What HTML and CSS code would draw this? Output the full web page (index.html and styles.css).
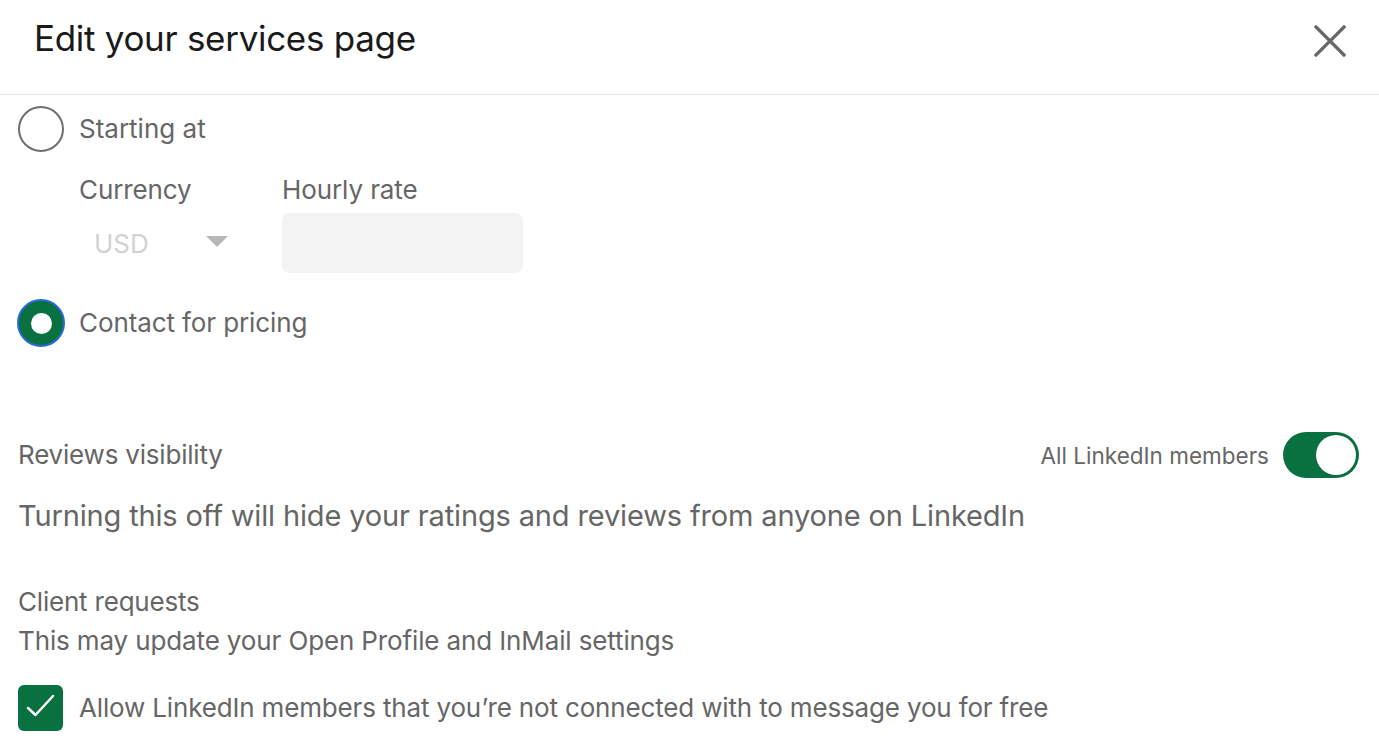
FILE: index.html
```html
<!DOCTYPE html>
<html lang="en">
<head>
<meta charset="utf-8">
<title>Edit your services page</title>
<link rel="stylesheet" href="styles.css">
</head>
<body>
<div class="modal">
  <header class="modal-header">
    <h1 class="modal-title">Edit your services page</h1>
    <button class="close-btn" aria-label="Close">
      <svg width="32" height="32" viewBox="0 0 32 32"><path d="M2 2 L30 30 M30 2 L2 30" stroke="#666" stroke-width="3.2" stroke-linecap="square" fill="none"/></svg>
    </button>
  </header>
  <main class="modal-body">
    <label class="radio-row first">
      <span class="radio"></span>
      <span class="radio-label">Starting at</span>
    </label>
    <div class="price-fields">
      <div class="field currency">
        <span class="field-label">Currency</span>
        <div class="select">
          <span class="select-value">USD</span>
          <span class="select-caret"></span>
        </div>
      </div>
      <div class="field rate">
        <span class="field-label">Hourly rate</span>
        <div class="input"></div>
      </div>
    </div>
    <label class="radio-row second">
      <span class="radio checked"></span>
      <span class="radio-label">Contact for pricing</span>
    </label>

    <section class="reviews">
      <div class="reviews-head">
        <span class="section-label">Reviews visibility</span>
        <div class="toggle-wrap">
          <span class="toggle-label">All LinkedIn members</span>
          <span class="toggle"><span class="knob"></span></span>
        </div>
      </div>
      <p class="reviews-desc">Turning this off will hide your ratings and reviews from anyone on LinkedIn</p>
    </section>

    <section class="clients">
      <div class="section-label">Client requests</div>
      <div class="clients-desc">This may update your Open Profile and InMail settings</div>
      <label class="check-row">
        <span class="checkbox">
          <svg width="45" height="46" viewBox="0 0 45 46"><path d="M10 23 L17.5 30 L35 11" stroke="#fff" stroke-width="2.5" fill="none" stroke-linecap="round" stroke-linejoin="round"/></svg>
        </span>
        <span class="check-label">Allow LinkedIn members that you’re not connected with to message you for free</span>
      </label>
    </section>
  </main>
</div>
</body>
</html>
```

FILE: styles.css
```css
* { box-sizing: border-box; }
html, body { margin: 0; padding: 0; background: #fff; }
body {
  font-family: Inter, "Noto Sans", "Liberation Sans", sans-serif;
  color: #666;
  width: 1379px;
  height: 750px;
  overflow: hidden;
}
.modal { width: 100%; }
.modal-header {
  height: 95px;
  border-bottom: 1px solid #e6e6e6;
  display: flex;
  align-items: center;
  justify-content: space-between;
  padding: 0 33px 0 34px;
}
.modal-title {
  margin: 0 0 18px 0;
  font-size: 35px;
  font-weight: 400;
  color: #1a1a1a;
  letter-spacing: -0.3px;
}
.close-btn {
  border: 0;
  background: none;
  padding: 0;
  width: 32px;
  height: 32px;
  margin-bottom: 12px;
  display: flex;
}
.modal-body { padding: 0 20px 0 18px; }

.radio-row {
  display: flex;
  align-items: center;
  gap: 15px;
  height: 46px;
}
.radio-row.first { margin-top: 11px; }
.radio-row.second { margin-top: 27px; }
.radio {
  width: 46px;
  height: 46px;
  border-radius: 50%;
  border: 2px solid #6f6f6f;
  flex: none;
  position: relative;
}
.radio.checked {
  width: 48px;
  height: 48px;
  margin-left: -1px;
  border: 2px solid #2a6ad8;
  background: #09713f;
  box-shadow: inset 0 0 0 1px #09713f;
}
.radio.checked::after {
  content: "";
  position: absolute;
  left: 50%; top: 50%;
  width: 21px; height: 21px;
  margin: -10.5px 0 0 -10.5px;
  border-radius: 50%;
  background: #fff;
}
.radio-row.second { gap: 14px; }
.radio-label { font-size: 26px; line-height: 32px; color: #666; }
.radio-row.second .radio-label { letter-spacing: -0.1px; }

.price-fields {
  display: flex;
  gap: 22px;
  margin-left: 61px;
  margin-top: 23px;
}
.field { display: flex; flex-direction: column; }
.field-label { font-size: 26px; line-height: 30px; color: #666; letter-spacing: -0.1px; }
.currency { width: 181px; }
.select {
  height: 60px;
  margin-top: 8px;
  display: flex;
  align-items: center;
  padding-left: 15px;
}
.select-value { font-size: 26px; color: #d2d2d2; width: 112px; }
.select-caret {
  width: 0; height: 0;
  border-left: 11px solid transparent;
  border-right: 11px solid transparent;
  border-top: 11px solid #b8b8b8;
  margin-top: -4px;
}
.input {
  width: 241px;
  height: 60px;
  margin-top: 8px;
  border-radius: 8px;
  background: #f3f3f3;
}

.reviews { margin-top: 86px; }
.reviews-head {
  display: flex;
  align-items: center;
  justify-content: space-between;
  height: 46px;
}
.section-label { font-size: 26px; line-height: 32px; color: #666; letter-spacing: -0.2px; }
.toggle-wrap { display: flex; align-items: center; gap: 14px; }
.toggle-label { font-size: 22.5px; color: #666; }
.toggle {
  width: 76px;
  height: 46px;
  border-radius: 23px;
  background: #09713f;
  display: flex;
  align-items: center;
  justify-content: flex-end;
  padding-right: 3px;
}
.knob {
  width: 40px;
  height: 40px;
  border-radius: 50%;
  background: #fff;
  box-shadow: 0 0 1px rgba(0,0,0,0.4);
}
.reviews-desc {
  margin: 20px 0 0 0;
  font-size: 29px;
  line-height: 36px;
  color: #666;
  letter-spacing: -0.15px;
}

.clients { margin-top: 52px; }
.clients-desc { font-size: 26px; line-height: 32px; color: #666; margin-top: 7px; letter-spacing: -0.13px; }
.check-row {
  display: flex;
  align-items: center;
  gap: 16px;
  margin-top: 28px;
}
.checkbox {
  width: 45px;
  height: 46px;
  border-radius: 6px;
  background: #09713f;
  display: flex;
  flex: none;
}
.check-label { font-size: 26px; line-height: 32px; color: #666; letter-spacing: -0.16px; }
```
